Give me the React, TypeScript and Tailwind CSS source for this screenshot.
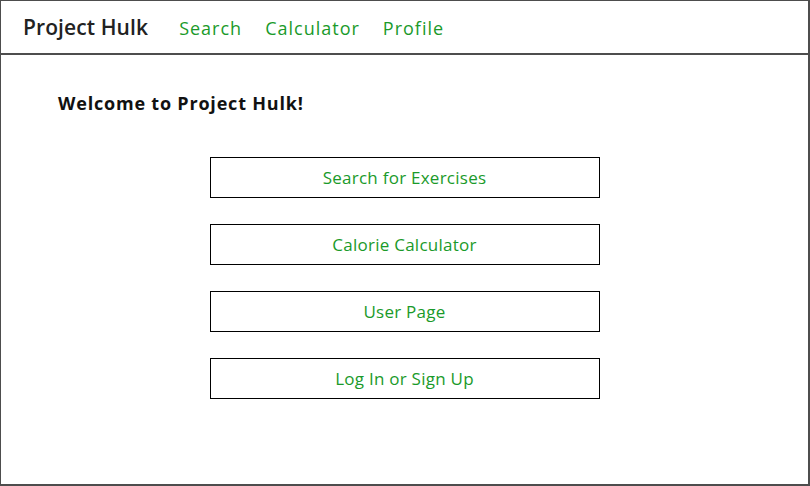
import React from "react";

const links = ["Search", "Calculator", "Profile"];
const actions = ["Search for Exercises", "Calorie Calculator", "User Page", "Log In or Sign Up"];

const App = () => {
  return (
    <div
      className="w-[810px] h-[486px] bg-white border-t border-l border-r-2 border-b-2 border-[#4d4d4d] flex flex-col"
      style={{ fontFamily: "'Open Sans', 'Noto Sans', sans-serif" }}
    >
      <header className="h-[54px] shrink-0 border-b-2 border-[#4d4d4d] flex items-center pl-[22px] pt-[2px]">
        <h1 className="text-[21px] font-semibold text-[#222] tracking-[0.1px] mr-[31px]">Project Hulk</h1>
        <nav className="flex gap-[23px]">
          {links.map((l) => (
            <a key={l} className="text-[18px] tracking-[1px] text-[#1a9a2a]">
              {l}
            </a>
          ))}
        </nav>
      </header>

      <main className="flex flex-col">
        <h2 className="pl-[57px] pt-[35px] text-[18px] tracking-[0.8px] font-bold text-[#111]">Welcome to Project Hulk!</h2>
        <div className="flex flex-col items-center gap-[26px] mt-[40px]">
          {actions.map((a) => (
            <button
              key={a}
              className="w-[390px] h-[41px] border-[1.5px] border-black text-[17px] tracking-[0.25px] text-[#1a9a2a] flex items-center justify-center"
            >
              {a}
            </button>
          ))}
        </div>
      </main>
    </div>
  );
};

export default App;
